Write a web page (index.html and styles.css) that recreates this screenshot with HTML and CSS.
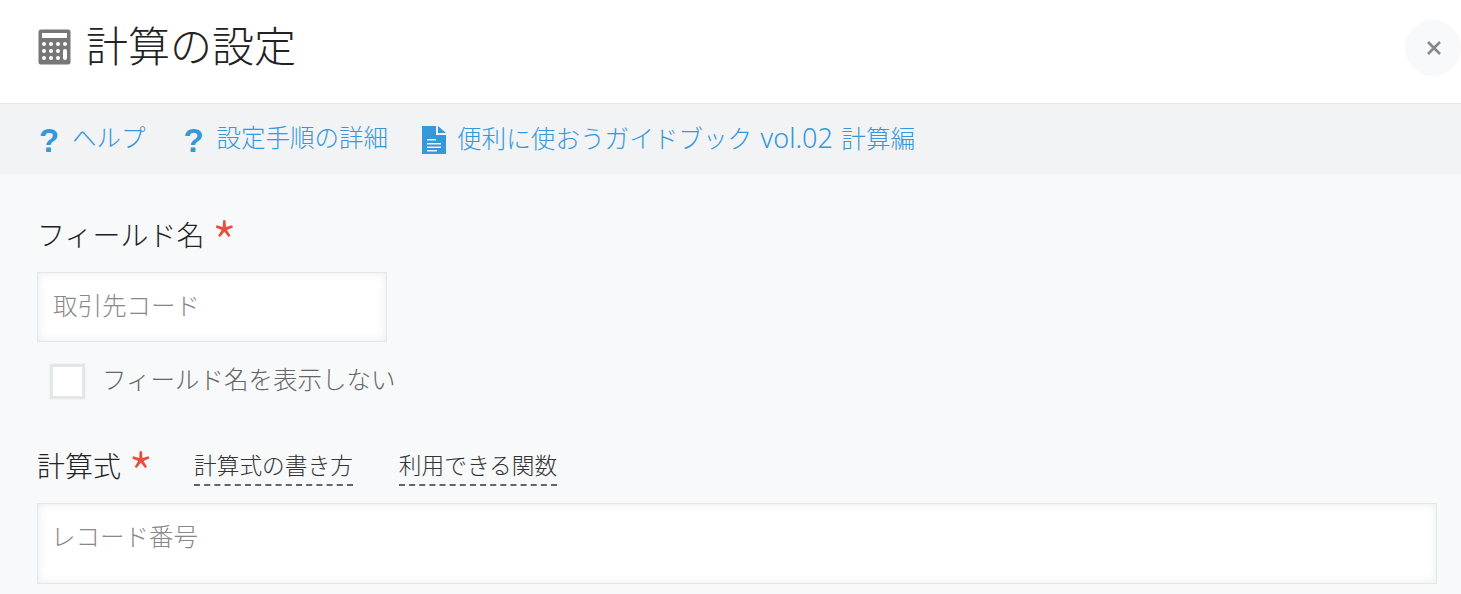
FILE: index.html
```html
<!DOCTYPE html>
<html lang="ja">
<head>
  <meta charset="UTF-8" />
  <meta name="viewport" content="width=device-width, initial-scale=1.0"/>
  <title>計算の設定</title>
  <link rel="stylesheet" href="styles.css">
</head>
<body>

  <!-- title -->
  <header class="title-bar">
    <svg class="title-icon" width="33" height="36" viewBox="0 0 33 36">
      <path fill="#777" fill-rule="evenodd" d="M3 .5h27a2.500 2.500 0 0 1 2.500 2.500v30a2.500 2.500 0 0 1-2.500 2.500h-27a2.500 2.500 0 0 1-2.500-2.500v-30a2.500 2.500 0 0 1 2.500-2.500zM4 4v5h25v-5z"/>
      <g fill="#fff">
        <circle cx="6" cy="15" r="2"/><circle cx="13" cy="15" r="2"/><circle cx="20" cy="15" r="2"/><circle cx="27" cy="15" r="2"/>
        <circle cx="6" cy="22" r="2"/><circle cx="13" cy="22" r="2"/><circle cx="20" cy="22" r="2"/>
        <circle cx="6" cy="29" r="2"/><circle cx="13" cy="29" r="2"/><circle cx="20" cy="29" r="2"/>
        <rect x="25" y="20" width="4" height="11" rx="2"/>
      </g>
    </svg>
    <h1>計算の設定</h1>
    <button class="close-btn" aria-label="close">
      <svg width="16" height="16" viewBox="0 0 16 16"><path d="M2 2l12 12M14 2l-12 12" stroke="#888" stroke-width="2.600" fill="none"/></svg>
    </button>
  </header>

  <!-- help links -->
  <nav class="help-bar">
    <a href="#" class="help-link"><span class="q-mark">?</span>ヘルプ</a>
    <a href="#" class="help-link"><span class="q-mark">?</span>設定手順の詳細</a>
    <a href="#" class="help-link doc-link">
      <svg class="doc-icon" width="24" height="28" viewBox="0 0 24 28">
        <path fill="#3498db" fill-rule="evenodd" d="M0 0h14v9h10v19h-24zM16 0l8 7h-8zM5 13v1.500h9v-1.500zM5 17v1.500h14v-1.500zM5 20.500v1.500h14v-1.500zM5 24v1.500h10v-1.500z"/>
      </svg><span>便利に使おうガイドブック <span class="latin">vol.02</span> 計算編</span></a>
  </nav>

  <main class="form">
    <div class="label-row first">
      <span class="label">フィールド名</span><span class="req">*</span>
    </div>
    <div class="text-box name-box">取引先コード</div>
    <label class="check-row">
      <span class="check"></span>
      <span>フィールド名を表示しない</span>
    </label>

    <div class="label-row second">
      <span class="label">計算式</span><span class="req">*</span>
      <a href="#" class="dash-link">計算式の書き方</a>
      <a href="#" class="dash-link">利用できる関数</a>
    </div>
    <div class="text-box formula-box">レコード番号</div>
  </main>

</body>
</html>
```

FILE: styles.css
```css
* {
  box-sizing: border-box;
}

html, body {
  height: 100%;
}

body {
  margin: 0;
  overflow: hidden;
  background: #f7f9fa;
  color: #333;
  font-family: "Noto Sans CJK JP", "Noto Sans", sans-serif;
  font-weight: 300;
}

.title-bar {
  display: flex;
  align-items: center;
  height: 104px;
  padding: 0 0 8px 38px;
  background: #fff;
  border-bottom: 1px solid #e3e7e8;
}

.title-icon {
  flex: none;
  margin-bottom: 2px;
}

.title-bar h1 {
  margin: 0 0 8px 15px;
  font-size: 42px;
  line-height: 56px;
  font-weight: 300;
  color: #222;
}

.close-btn {
  display: flex;
  align-items: center;
  justify-content: center;
  width: 56px;
  height: 56px;
  margin: 0 0 0 auto;
  padding: 0 0 0 2px;
  border: none;
  border-radius: 50%;
  background: #f7f9fa;
}

.help-bar {
  display: flex;
  align-items: center;
  gap: 37px;
  height: 70px;
  padding: 0 0 4px 38px;
  background: #f2f3f5;
}

.help-link {
  display: flex;
  align-items: center;
  color: #3498db;
  font-size: 24.500px;
  line-height: 32px;
  text-decoration: none;
}

.latin {
  margin: 0 3px;
  font-family: "Noto Sans", sans-serif;
  font-size: 27px;
  font-weight: 300;
}

.q-mark {
  width: 34px;
  margin-top: 8px;
  padding-left: 1px;
  font-family: "Liberation Sans", sans-serif;
  font-size: 33px;
  font-weight: 700;
}

.doc-link {
  margin-left: -3px;
  font-size: 24.600px;
}

.doc-icon {
  flex: none;
  margin: 6px 11px 0 0;
}

.form {
  padding: 0 24px 0 37px;
}

.label-row {
  display: flex;
  align-items: center;
  height: 40px;
}

.label-row.first {
  margin-top: 40px;
}

.label-row.second {
  margin-top: 46px;
}

.label {
  font-size: 28px;
  font-weight: 300;
  color: #222;
}

.req {
  width: 20px;
  margin-left: 7px;
  color: #e74c3c;
  font-size: 58px;
  font-weight: 300;
  line-height: 40px;
  padding-top: 14px;
}

.text-box {
  padding: 14px 15px;
  background: #fff;
  border: 1px solid #e3e7e8;
  box-shadow: inset 0 0 10px rgba(55, 55, 55, 0.1);
  color: #888;
  font-size: 24.500px;
  line-height: 36px;
}

.name-box {
  width: 350px;
  height: 70px;
  margin-top: 18px;
}

.formula-box {
  width: 1400px;
  height: 81px;
  margin-top: 18px;
  padding-left: 13px;
}

.check-row {
  display: flex;
  align-items: flex-start;
  gap: 17px;
  height: 35px;
  margin: 22px 0 0 13px;
  color: #666;
  font-size: 24.500px;
  line-height: 30px;
}

.check {
  flex: none;
  width: 35px;
  height: 35px;
  background: #fff;
  border: 3px solid #e3e7e8;
  box-shadow: 0 0 1px #ccc;
}

.dash-link {
  margin: 0 0 2px 46px;
  padding: 6px 0 2px;
  color: #333;
  font-size: 22.700px;
  line-height: 34px;
  text-decoration: none;
  border-bottom: 2px dashed #666;
}
```
